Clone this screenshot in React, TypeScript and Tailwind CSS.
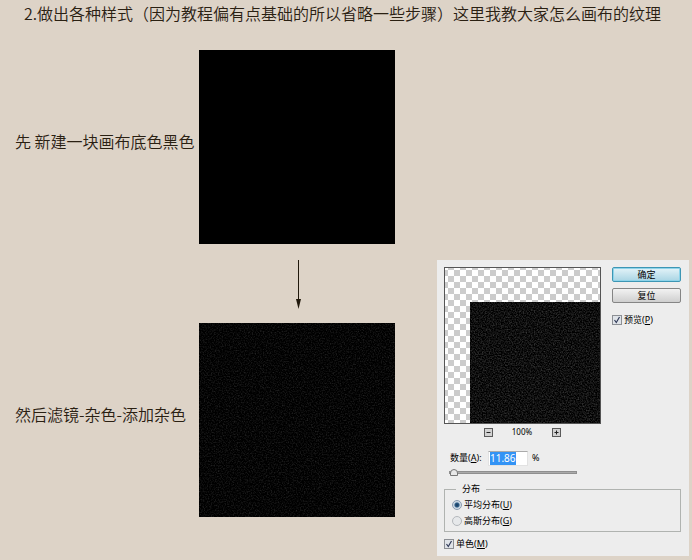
import { useEffect, useRef } from "react";
import type { ReactNode } from "react";

function Noise({ id, level, base, className }: { id: string; level: number; base: number; className: string }) {
  const row = `${level} 0 0 0 ${-level * 0.5 + base}`;
  return (
    <svg className={className} aria-hidden="true">
      <filter id={id} x="0" y="0" width="100%" height="100%" colorInterpolationFilters="sRGB">
        <feTurbulence type="fractalNoise" baseFrequency="0.73" numOctaves="2" seed="7" />
        <feColorMatrix values={`${row} ${row} ${row} 0 0 0 0 1`} />
      </filter>
      <rect width="100%" height="100%" fill="#000" />
      <rect width="100%" height="100%" filter={`url(#${id})`} />
    </svg>
  );
}

function CheckBox({ id, children }: { id: string; children: ReactNode }) {
  return (
    <div className="flex h-3 items-center gap-0.5">
      <span className="relative flex size-[10px]">
        <input
          id={id}
          type="checkbox"
          defaultChecked
          className="peer size-[10px] appearance-none border border-[#8c8f94] bg-[#dfe3e8]"
        />
        <svg viewBox="0 0 10 10" className="pointer-events-none absolute inset-0 hidden size-[10px] peer-checked:block">
          <path d="M2.5 5 L4.3 7.5 L7.5 2" fill="none" stroke="#303a58" strokeWidth="1.2" />
        </svg>
      </span>
      <label htmlFor={id}>{children}</label>
    </div>
  );
}

function Radio({ id, checked, children }: { id: string; checked?: boolean; children: ReactNode }) {
  return (
    <div className="flex h-4 items-center gap-0.5">
      <input
        id={id}
        type="radio"
        name="distribution"
        defaultChecked={checked}
        className="size-[10px] appearance-none rounded-full border border-[#b4b8bc] bg-[#e6e8ea] checked:border-[#8a9bb0] checked:bg-[radial-gradient(circle,#17395c_0,#2b5a84_35%,#cfdbe6_55%)]"
      />
      <label htmlFor={id}>{children}</label>
    </div>
  );
}

function ZoomButton({ label, plus }: { label: string; plus?: boolean }) {
  return (
    <button type="button" aria-label={label} className="size-[9px]">
      <svg viewBox="0 0 9 9" className="size-[9px]">
        <rect x="0.5" y="0.5" width="8" height="8" fill="#d2d2d2" stroke="#5a5a5a" />
        <path d={plus ? "M2.5 4.5H6.5M4.5 2.5V6.5" : "M2.5 4.5H6.5"} stroke="#222" strokeWidth="1" />
      </svg>
    </button>
  );
}

function NoiseDialog() {
  const amount = useRef<HTMLInputElement>(null);
  useEffect(() => {
    amount.current?.focus();
    amount.current?.select();
  }, []);

  return (
    <form className="mt-[210px] mr-[3px] flex-1 bg-[#ededed] px-[7px] pt-[7px] pb-[6px] font-['Noto_Sans','Noto_Sans_CJK_SC',sans-serif] text-[9px] leading-3 font-normal text-black">
      <div className="flex gap-[11px]">
        <div className="w-[157px]">
          <div className="flex h-[157px] items-end justify-end border border-[#555] bg-white bg-[repeating-conic-gradient(#ccc_0_25%,#fff_0_50%)] bg-[size:12px_12px] bg-[position:3px_2px]">
            <Noise id="preview-noise" level={0.42} base={0.06} className="h-[121px] w-[130px]" />
          </div>
          <div className="mt-[2px] flex h-3 items-center justify-center gap-[19px] pr-px text-[8px]">
            <ZoomButton label="缩小" />
            <span className="w-[21px] text-center">100%</span>
            <ZoomButton label="放大" plus />
          </div>
        </div>
        <div className="mr-px flex flex-1 flex-col">
          <button type="submit" className="h-[15px] rounded-[2px] border border-[#3d96b4] bg-linear-to-b from-[#e4f3f8] to-[#a9d5e4] shadow-[inset_0_0_0_1px_#8ed4ea]">
            确定
          </button>
          <button type="reset" className="mt-[6px] mb-[11px] h-[15px] rounded-[2px] border border-[#858585] bg-linear-to-b from-[#f2f2f2] to-[#cfcfcf]">
            复位
          </button>
          <CheckBox id="preview">
            预览(<u>P</u>)
          </CheckBox>
        </div>
      </div>

      <div className="mt-[12px] flex h-4 items-center pl-[6px]">
        <label htmlFor="amount" className="w-[38px] whitespace-nowrap">
          数量(<u>A</u>):
        </label>
        <input
          id="amount"
          ref={amount}
          defaultValue="11.86"
          className="h-[15px] w-[40px] border border-[#e2e2e2] border-t-[#aaa] bg-white px-px text-[10px] outline-none selection:bg-[#3393f5] selection:text-white"
        />
        <span className="ml-1">%</span>
      </div>
      <input
        type="range"
        aria-label="数量"
        min="0"
        max="400"
        defaultValue="1"
        className="mt-[2px] ml-[5px] block h-2 w-[128px] appearance-none bg-transparent [&::-webkit-slider-runnable-track]:h-[3px] [&::-webkit-slider-runnable-track]:border [&::-webkit-slider-runnable-track]:border-[#8f8f8f] [&::-webkit-slider-runnable-track]:bg-[#aaa] [&::-webkit-slider-thumb]:-mt-[3px] [&::-webkit-slider-thumb]:h-[7px] [&::-webkit-slider-thumb]:w-2 [&::-webkit-slider-thumb]:appearance-none [&::-webkit-slider-thumb]:rounded-t-full [&::-webkit-slider-thumb]:border [&::-webkit-slider-thumb]:border-[#777] [&::-webkit-slider-thumb]:bg-[#e8e8e8]"
      />

      <fieldset className="mt-[7px] mr-px border border-[#b0b3b0] pt-[2px] pb-[2px] pl-[7px]">
        <legend className="ml-1 px-[6px] leading-3">分布</legend>
        <Radio id="uniform" checked>
          平均分布(<u>U</u>)
        </Radio>
        <Radio id="gaussian">
          高斯分布(<u>G</u>)
        </Radio>
      </fieldset>
      <div className="mt-[6px]">
        <CheckBox id="mono">
          单色(<u>M</u>)
        </CheckBox>
      </div>
    </form>
  );
}

function Step({ caption, children }: { caption: string; children: ReactNode }) {
  return (
    <section className="flex items-center">
      <h2 className="w-[199px] pb-3 pl-[15px] whitespace-nowrap">{caption}</h2>
      {children}
    </section>
  );
}

export default function App() {
  return (
    <main className="min-h-screen bg-[#ddd3c7] pb-1 font-['Noto_Sans_CJK_SC',sans-serif] text-base font-[350] text-[#2a2012]">
      <h1 className="pl-6 leading-[26px] whitespace-nowrap">
        2.做出各种样式（因为教程偏有点基础的所以省略一些步骤）这里我教大家怎么画布的纹理
      </h1>
      <div className="mt-6 flex items-start gap-[42px]">
        <div>
          <Step caption="先 新建一块画布底色黑色">
            <div className="h-[194px] w-[196px] bg-black" />
          </Step>
          <div className="flex h-[79px] justify-center pt-4 pl-[202px]">
            <svg viewBox="0 0 7 49" className="h-[49px] w-[7px]" aria-hidden="true">
              <path d="M3.5 0V42" stroke="#20180c" />
              <path d="M1 39H6L3.5 49Z" fill="#20180c" />
            </svg>
          </div>
          <Step caption="然后滤镜-杂色-添加杂色">
            <Noise id="canvas-noise" level={0.3} base={0.02} className="h-[194px] w-[196px]" />
          </Step>
        </div>
        <NoiseDialog />
      </div>
    </main>
  );
}
